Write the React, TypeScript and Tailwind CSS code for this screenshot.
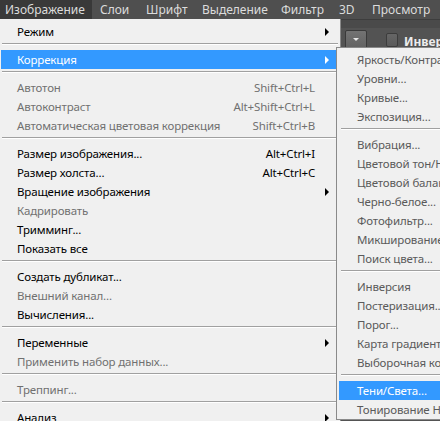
import React from "react";

type Item =
  | { sep: true }
  | {
      sep?: false;
      label: string;
      keys?: string;
      arrow?: boolean;
      off?: boolean;
      active?: boolean;
    };

const SEP: Item = { sep: true };

const imageMenu: Item[] = [
  { label: "Режим", arrow: true },
  SEP,
  { label: "Коррекция", arrow: true, active: true },
  SEP,
  { label: "Автотон", keys: "Shift+Ctrl+L", off: true },
  { label: "Автоконтраст", keys: "Alt+Shift+Ctrl+L", off: true },
  { label: "Автоматическая цветовая коррекция", keys: "Shift+Ctrl+B", off: true },
  SEP,
  { label: "Размер изображения...", keys: "Alt+Ctrl+I" },
  { label: "Размер холста...", keys: "Alt+Ctrl+C" },
  { label: "Вращение изображения", arrow: true },
  { label: "Кадрировать", off: true },
  { label: "Тримминг..." },
  { label: "Показать все" },
  SEP,
  { label: "Создать дубликат..." },
  { label: "Внешний канал...", off: true },
  { label: "Вычисления..." },
  SEP,
  { label: "Переменные", arrow: true },
  { label: "Применить набор данных...", off: true },
  SEP,
  { label: "Треппинг...", off: true },
  SEP,
  { label: "Анализ", arrow: true },
];

const adjustMenu: Item[] = [
  { label: "Яркость/Контраст..." },
  { label: "Уровни..." },
  { label: "Кривые..." },
  { label: "Экспозиция..." },
  SEP,
  { label: "Вибрация..." },
  { label: "Цветовой тон/Насыщенность..." },
  { label: "Цветовой баланс..." },
  { label: "Черно-белое..." },
  { label: "Фотофильтр..." },
  { label: "Микширование каналов..." },
  { label: "Поиск цвета..." },
  SEP,
  { label: "Инверсия" },
  { label: "Постеризация..." },
  { label: "Порог..." },
  { label: "Карта градиента..." },
  { label: "Выборочная коррекция цвета..." },
  SEP,
  { label: "Тени/Света...", active: true },
  { label: "Тонирование HDR..." },
];

const topMenu = [
  { label: "Изображение", w: "w-[92px] pl-[5px]", open: true },
  { label: "Слои", w: "w-[46px] pl-[8px]" },
  { label: "Шрифт", w: "w-[56px] pl-[8px]" },
  { label: "Выделение", w: "w-[79px] pl-[8px]" },
  { label: "Фильтр", w: "w-[58px] pl-[8px]" },
  { label: "3D", w: "w-[33px] pl-[8px]" },
  { label: "Просмотр", w: "pl-[8px]" },
];

function Separator({ inset }: { inset: string }) {
  return (
    <div className={`h-[9px] pt-[2px] ${inset}`}>
      <div className="border-t border-[#a0a0a0]" />
      <div className="border-t border-white" />
    </div>
  );
}

function MenuRows({
  items,
  inset,
  pad,
  dim,
}: {
  items: Item[];
  inset: string;
  pad: string;
  dim: string;
}) {
  return (
    <>
      {items.map((it, i) => {
        if (it.sep) return <Separator key={i} inset={inset} />;
        const color = it.active ? "text-white" : it.off ? "text-[#707070]" : dim;
        return (
          <div
            key={i}
            className={`flex h-[19px] items-center whitespace-nowrap ${pad} ${color} ${
              it.active ? "bg-[#3399ff]" : ""
            }`}
          >
            <span className="flex-1">{it.label}</span>
            {it.keys && <span className="mr-[3px]">{it.keys}</span>}
            <span
              className={`ml-[7px] h-0 w-0 border-y-[4px] border-l-[4px] border-y-transparent ${
                it.arrow
                  ? it.active
                    ? "border-l-white"
                    : "border-l-black"
                  : "border-l-transparent"
              }`}
            />
          </div>
        );
      })}
    </>
  );
}

export default function App() {
  return (
    <div
      className="relative h-[421px] w-[440px] overflow-hidden bg-[#535353] text-[11.5px] tracking-[-0.15px]"
      style={{ fontFamily: '"Noto Sans", "DejaVu Sans", sans-serif' }}
    >
      {/* app menu bar */}
      <div className="flex h-[19px] items-center bg-[#4f4f4f] text-[12px] tracking-normal text-[#dcdcdc]">
        {topMenu.map((m) => (
          <div
            key={m.label}
            className={`flex h-full shrink-0 items-center whitespace-nowrap ${m.w} ${
              m.open ? "bg-[#393939]" : ""
            }`}
          >
            {m.label}
          </div>
        ))}
      </div>

      {/* options bar behind the menus */}
      <div className="h-[9px] border-t border-[#3d3d3d] bg-[#4a4a4a]" />
      <div className="flex h-[40px] items-start bg-[#535353] pl-[345px] pt-[2px]">
        <div className="flex h-[19px] w-[22px] shrink-0 items-center justify-center rounded-[2px] border border-[#3a3a3a] bg-gradient-to-b from-[#737373] to-[#626262]">
          <span className="h-0 w-0 border-x-[3px] border-t-[3px] border-x-transparent border-t-[#e6e6e6]" />
        </div>
        <div className="ml-[19px] mt-[3px] h-[14px] w-[12px] shrink-0 rounded-[2px] border border-[#3c3c3c] bg-gradient-to-b from-[#666] to-[#5a5a5a]" />
        <span className="ml-[6px] mt-[3px] shrink-0 whitespace-nowrap text-[12px] font-bold tracking-normal text-[#ececec]">
          Инверсия
        </span>
      </div>

      {/* Изображение dropdown */}
      <div className="absolute left-0 top-[19px] w-[341px] border-r border-b border-[#8a8a8a] bg-[#f0f0f0] pt-[3px] pl-[1px] pr-[2px]">
        <MenuRows items={imageMenu} inset="pl-[1px]" pad="pl-[16px] pr-[9px]" dim="text-black" />
      </div>

      {/* Коррекция submenu */}
      <div className="absolute left-[336px] top-[47px] w-[230px] border border-[#8a8a8a] bg-[#f0f0f0] pt-[2px] pl-[2px]">
        <MenuRows items={adjustMenu} inset="pl-[2px]" pad="pl-[18px] pr-[9px]" dim="text-[#5a5a5a]" />
      </div>
    </div>
  );
}
